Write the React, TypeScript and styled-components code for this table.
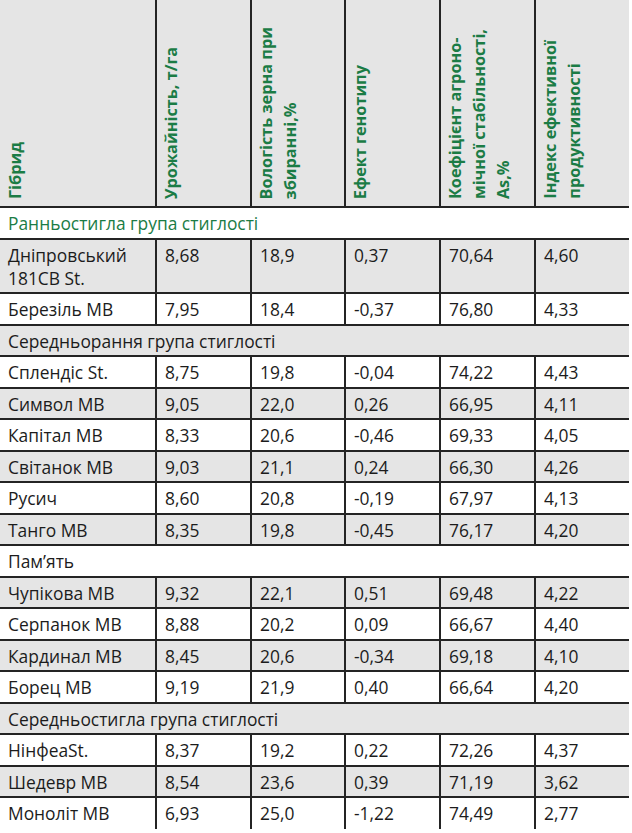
import React from "react";
import styled, { createGlobalStyle } from "styled-components";

const GlobalStyle = createGlobalStyle`
  html, body {
    margin: 0;
    padding: 0;
    background: #ffffff;
  }
  body {
    font-family: "Open Sans", "Noto Sans", sans-serif;
  }
`;

const COLS = "155px 95px 94px 95px 95px 95px";
const LINE = "#242424";
const SHADE = "#e5e5e5";
const GREEN = "#1b7c45";

const Table = styled.div`
  width: 629px;
  font-family: "Open Sans", "Noto Sans", sans-serif;
  color: #1c1c1c;
`;

const HeaderRow = styled.div`
  display: grid;
  grid-template-columns: ${COLS};
  height: 208px;
  box-sizing: border-box;
  background: ${SHADE};
  border-bottom: 2px solid ${LINE};
`;

const HeadCell = styled.div<{ $first?: boolean }>`
  display: flex;
  align-items: flex-end;
  box-sizing: border-box;
  padding: 0 0 7px ${(p) => (p.$first ? "3px" : "2px")};
  border-left: ${(p) => (p.$first ? "none" : `2px solid ${LINE}`)};
`;

const HeadLabel = styled.span`
  writing-mode: vertical-rl;
  transform: rotate(180deg);
  font-size: 16.3px;
  font-weight: 700;
  line-height: 24px;
  color: ${GREEN};
  white-space: nowrap;
`;

const DataRow = styled.div<{ $h: number; $shaded?: boolean; $last?: boolean }>`
  display: grid;
  grid-template-columns: ${COLS};
  height: ${(p) => p.$h}px;
  box-sizing: border-box;
  background: ${(p) => (p.$shaded ? SHADE : "#ffffff")};
  border-bottom: ${(p) => (p.$last ? "none" : `2px solid ${LINE}`)};
`;

const Cell = styled.div<{ $first?: boolean }>`
  box-sizing: border-box;
  padding: 4px 4px 0 8px;
  border-left: ${(p) => (p.$first ? "none" : `2px solid ${LINE}`)};
  font-size: 17.4px;
  line-height: 22.5px;
  white-space: pre-line;
`;

const GroupRow = styled.div<{ $h: number; $shaded?: boolean; $accent?: boolean }>`
  height: ${(p) => p.$h}px;
  box-sizing: border-box;
  padding: 4px 0 0 8px;
  background: ${(p) => (p.$shaded ? SHADE : "#ffffff")};
  border-bottom: 2px solid ${LINE};
  color: ${(p) => (p.$accent ? GREEN : "#1c1c1c")};
  font-size: 17.4px;
  line-height: 22.5px;
`;

type Item =
  | { kind: "group"; title: string; h: number; shaded?: boolean; accent?: boolean }
  | { kind: "row"; cells: string[]; h: number; shaded?: boolean; last?: boolean };

const items: Item[] = [
  { kind: "group", title: "Ранньостигла група стиглості", h: 32, accent: true },
  { kind: "row", cells: ["Дніпровський\n181СВ St.", "8,68", "18,9", "0,37", "70,64", "4,60"], h: 54, shaded: true },
  { kind: "row", cells: ["Березіль МВ", "7,95", "18,4", "-0,37", "76,80", "4,33"], h: 32 },
  { kind: "group", title: "Середньорання група стиглості", h: 31, shaded: true },
  { kind: "row", cells: ["Сплендіс St.", "8,75", "19,8", "-0,04", "74,22", "4,43"], h: 32 },
  { kind: "row", cells: ["Символ МВ", "9,05", "22,0", "0,26", "66,95", "4,11"], h: 31, shaded: true },
  { kind: "row", cells: ["Капітал МВ", "8,33", "20,6", "-0,46", "69,33", "4,05"], h: 32 },
  { kind: "row", cells: ["Світанок МВ", "9,03", "21,1", "0,24", "66,30", "4,26"], h: 31, shaded: true },
  { kind: "row", cells: ["Русич", "8,60", "20,8", "-0,19", "67,97", "4,13"], h: 32 },
  { kind: "row", cells: ["Танго МВ", "8,35", "19,8", "-0,45", "76,17", "4,20"], h: 31, shaded: true },
  { kind: "group", title: "Пам’ять", h: 32 },
  { kind: "row", cells: ["Чупікова МВ", "9,32", "22,1", "0,51", "69,48", "4,22"], h: 31, shaded: true },
  { kind: "row", cells: ["Серпанок МВ", "8,88", "20,2", "0,09", "66,67", "4,40"], h: 32 },
  { kind: "row", cells: ["Кардинал МВ", "8,45", "20,6", "-0,34", "69,18", "4,10"], h: 31, shaded: true },
  { kind: "row", cells: ["Борец МВ", "9,19", "21,9", "0,40", "66,64", "4,20"], h: 32 },
  { kind: "group", title: "Середньостигла група стиглості", h: 31, shaded: true },
  { kind: "row", cells: ["НінфеаSt.", "8,37", "19,2", "0,22", "72,26", "4,37"], h: 32 },
  { kind: "row", cells: ["Шедевр МВ", "8,54", "23,6", "0,39", "71,19", "3,62"], h: 31, shaded: true },
  { kind: "row", cells: ["Моноліт МВ", "6,93", "25,0", "-1,22", "74,49", "2,77"], h: 31, last: true },
];

const headers: React.ReactNode[] = [
  "Гібрид",
  "Урожайність, т/га",
  <>Вологість зерна при<br />збиранні,%</>,
  "Ефект генотипу",
  <>Коефіцієнт агроно-<br />мічної стабільності,<br />As,%</>,
  <>Індекс ефективної<br />продуктивності</>,
];

export default function App() {
  return (
    <>
      <GlobalStyle />
      <Table>
        <HeaderRow>
          {headers.map((h, i) => (
            <HeadCell key={i} $first={i === 0}>
              <HeadLabel>{h}</HeadLabel>
            </HeadCell>
          ))}
        </HeaderRow>
        {items.map((it, idx) =>
          it.kind === "group" ? (
            <GroupRow key={idx} $h={it.h} $shaded={it.shaded} $accent={it.accent}>
              {it.title}
            </GroupRow>
          ) : (
            <DataRow key={idx} $h={it.h} $shaded={it.shaded} $last={it.last}>
              {it.cells.map((c, j) => (
                <Cell key={j} $first={j === 0}>
                  {c}
                </Cell>
              ))}
            </DataRow>
          )
        )}
      </Table>
    </>
  );
}
